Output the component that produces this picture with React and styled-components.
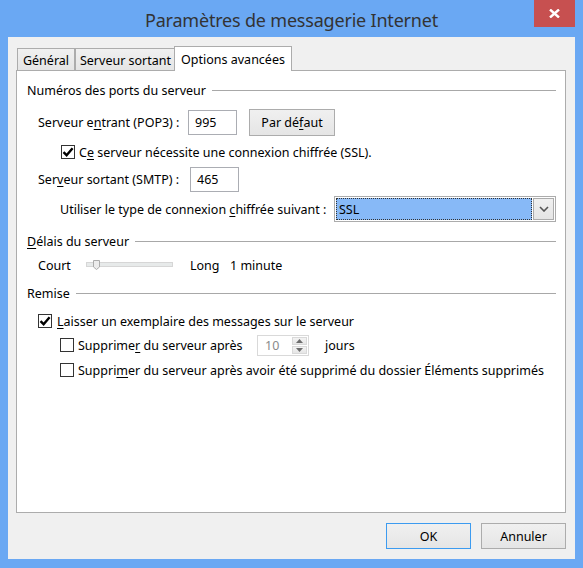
import React from 'react'
import styled, { createGlobalStyle } from 'styled-components'

const GlobalStyle = createGlobalStyle`
  html, body {
    margin: 0;
    padding: 0;
    overflow: hidden;
    background: #6aa8f3;
  }
  body {
    font-family: 'Noto Sans', 'Open Sans', sans-serif;
    font-size: 12.5px;
    color: #000;
  }
`

const Window = styled.div`
  width: 583px;
  height: 568px;
  background: #6aa8f3;
  display: flex;
  flex-direction: column;
  box-sizing: border-box;
`

const TitleBar = styled.div`
  height: 37px;
  display: grid;
  grid-template-columns: 1fr auto 1fr;
  padding: 0 8px;
  flex-shrink: 0;
`

const Title = styled.div`
  grid-column: 2;
  align-self: center;
  font-size: 18px;
  letter-spacing: -0.2px;
  color: #333;
  padding-top: 2px;
  white-space: nowrap;
`

const CloseButton = styled.div`
  grid-column: 3;
  justify-self: end;
  align-self: start;
  width: 41px;
  height: 27px;
  background: #c75050;
  display: flex;
  align-items: center;
  justify-content: center;
`

const Client = styled.div`
  flex: 1;
  margin: 0 8px 9px 8px;
  background: #f0f0f0;
  padding: 9px 9px 10px 8px;
  display: flex;
  flex-direction: column;
  min-height: 0;
`

const TabStrip = styled.div`
  display: flex;
  align-items: flex-end;
  height: 24px;
  padding-left: 1px;
  flex-shrink: 0;
`

const Tab = styled.div`
  box-sizing: border-box;
  width: ${p => p.$w}px;
  height: ${p => (p.$active ? 25 : 22)}px;
  margin-left: ${p => (p.$active ? -2 : 0)}px;
  margin-bottom: ${p => (p.$active ? -1 : 0)}px;
  border: 1px solid #acacac;
  border-bottom: none;
  background: ${p => (p.$active ? '#fff' : 'linear-gradient(#f0f0f0, #e5e5e5)')};
  display: flex;
  align-items: center;
  justify-content: center;
  padding-top: ${p => (p.$active ? 0 : 2)}px;
  position: relative;
  z-index: ${p => (p.$active ? 2 : 1)};
  white-space: nowrap;
`

const Panel = styled.div`
  flex: 1;
  border: 1px solid #acacac;
  background: #fff;
  padding: 3px 9px 0 10px;
  display: flex;
  flex-direction: column;
`

const Row = styled.div`
  display: flex;
  align-items: center;
  height: ${p => p.$h}px;
  padding-left: ${p => p.$indent || 0}px;
  white-space: nowrap;
  flex-shrink: 0;
`

const GroupTitle = styled.span`
  padding-right: 6px;
`

const Rule = styled.div`
  flex: 1;
  height: 1px;
  background: #a8a8a8;
  margin-top: 1px;
`

const Label = styled.span`
  display: inline-block;
  width: ${p => (p.$w ? `${p.$w}px` : 'auto')};
  margin-left: ${p => p.$gap || 0}px;
  flex-shrink: 0;
`

const Key = styled.u`
  text-decoration: underline;
  text-underline-offset: 2px;
`

const TextBox = styled.div`
  box-sizing: border-box;
  width: 49px;
  height: 25px;
  border: 1px solid #abadb3;
  background: #fff;
  display: flex;
  align-items: center;
  padding-left: 6px;
`

const PushButton = styled.div`
  box-sizing: border-box;
  width: ${p => p.$w}px;
  height: ${p => p.$hh}px;
  border: 1px solid ${p => (p.$default ? '#3c9bf0' : '#acacac')};
  background: linear-gradient(#f0f0f0, #e5e5e5);
  display: flex;
  align-items: center;
  justify-content: center;
  margin-left: ${p => p.$gap || 0}px;
  flex-shrink: 0;
`

const Box = styled.div`
  box-sizing: border-box;
  width: 14px;
  height: 14px;
  border: 1px solid #333;
  background: #fff;
  display: flex;
  align-items: center;
  justify-content: center;
  margin-right: ${p => p.$gap || 4}px;
  flex-shrink: 0;
`

const Combo = styled.div`
  box-sizing: border-box;
  width: 222px;
  height: 26px;
  border: 1px solid #acacac;
  padding: 1px;
  display: flex;
  background: #fff;
`

const ComboValue = styled.div`
  flex: 1;
  background: #87b9f7;
  outline: 1px dotted #333;
  outline-offset: -1px;
  display: flex;
  align-items: center;
  padding-left: 3px;
`

const ComboArrow = styled.div`
  box-sizing: border-box;
  width: 21px;
  margin-left: 1px;
  border: 1px solid #acacac;
  background: linear-gradient(#f0f0f0, #e5e5e5);
  display: flex;
  align-items: center;
  justify-content: center;
`

const Spin = styled.div`
  box-sizing: border-box;
  width: 52px;
  height: 21px;
  border: 1px solid #d9d9d9;
  display: flex;
  background: #fff;
  flex-shrink: 0;
`

const SpinValue = styled.div`
  flex: 1;
  color: #8a8a8a;
  display: flex;
  align-items: center;
  padding-left: 7px;
`

const SpinButtons = styled.div`
  width: 15px;
  margin: 1px;
  display: flex;
  flex-direction: column;
  gap: 1px;
`

const SpinHalf = styled.div`
  flex: 1;
  box-sizing: border-box;
  border: 1px solid #d9d9d9;
  background: linear-gradient(#f3f3f3, #e6e6e6);
  display: flex;
  align-items: center;
  justify-content: center;
`

const ButtonBar = styled.div`
  display: flex;
  justify-content: flex-end;
  gap: 10px;
  margin-top: 10px;
  flex-shrink: 0;
`

const Check = ({ checked, gap }) => (
  <Box $gap={gap}>
    {checked && (
      <svg width="12" height="12" viewBox="0 0 12 12">
        <path d="M1.5 6.2 L4.6 9.2 L10.6 2.2" fill="none" stroke="#000" strokeWidth="2.4" />
      </svg>
    )}
  </Box>
)

const Slider = () => (
  <svg width="88" height="10" viewBox="0 0 88 10" style={{ flexShrink: 0 }}>
    <rect x="0.5" y="2.5" width="86" height="4" fill="#e7eaea" stroke="#d6d6d6" />
    <path d="M7.5 0.5 H13.5 V7 L10.5 9.5 L7.5 7 Z" fill="#ececec" stroke="#acacac" />
  </svg>
)

export default function App() {
  return (
    <>
      <GlobalStyle />
      <Window>
        <TitleBar>
          <Title>Paramètres de messagerie Internet</Title>
          <CloseButton>
            <svg width="11" height="9" viewBox="0 0 11 9">
              <path d="M1 0.5 L10 8.5 M10 0.5 L1 8.5" stroke="#fff" strokeWidth="2.4" />
            </svg>
          </CloseButton>
        </TitleBar>
        <Client>
          <TabStrip>
            <Tab $w={58}>Général</Tab>
            <Tab $w={101}>Serveur sortant</Tab>
            <Tab $w={118} $active>Options avancées</Tab>
          </TabStrip>
          <Panel>
            <Row $h={32}>
              <GroupTitle>Numéros des ports du serveur</GroupTitle>
              <Rule />
            </Row>
            <Row $h={32} $indent={11}>
              <Label $w={150}>Serveur e<Key>n</Key>trant (POP3) :</Label>
              <TextBox>995</TextBox>
              <PushButton $w={86} $hh={27} $gap={12}>Par dé<Key>f</Key>aut</PushButton>
            </Row>
            <Row $h={28} $indent={34}>
              <Check checked />
              <span>C<Key>e</Key> serveur nécessite une connexion chiffrée (SSL).</span>
            </Row>
            <Row $h={26} $indent={11}>
              <Label $w={152}>Ser<Key>v</Key>eur sortant (SMTP) :</Label>
              <TextBox>465</TextBox>
            </Row>
            <Row $h={34} $indent={33}>
              <Label $w={274}>Utiliser le type de connexion <Key>c</Key>hiffrée suivant :</Label>
              <Combo>
                <ComboValue>SSL</ComboValue>
                <ComboArrow>
                  <svg width="10" height="6" viewBox="0 0 10 6">
                    <path d="M1 1 L5 5 L9 1" fill="none" stroke="#555" strokeWidth="1.6" />
                  </svg>
                </ComboArrow>
              </Combo>
            </Row>
            <Row $h={30}>
              <GroupTitle><Key>D</Key>élais du serveur</GroupTitle>
              <Rule />
            </Row>
            <Row $h={18} $indent={11}>
              <Label $w={48}>Court</Label>
              <Slider />
              <Label $w={40} $gap={16}>Long</Label>
              <Label>1 minute</Label>
            </Row>
            <Row $h={38}>
              <GroupTitle>Remise</GroupTitle>
              <Rule />
            </Row>
            <Row $h={18} $indent={11}>
              <Check checked gap={5} />
              <span><Key>L</Key>aisser un exemplaire des messages sur le serveur</span>
            </Row>
            <Row $h={30} $indent={33}>
              <Check />
              <Label $w={179}>Supprime<Key>r</Key> du serveur après</Label>
              <Spin>
                <SpinValue>10</SpinValue>
                <SpinButtons>
                  <SpinHalf>
                    <svg width="7" height="4" viewBox="0 0 7 4"><path d="M0 4 L3.5 0 L7 4 Z" fill="#6d6d6d" /></svg>
                  </SpinHalf>
                  <SpinHalf>
                    <svg width="7" height="4" viewBox="0 0 7 4"><path d="M0 0 L3.5 4 L7 0 Z" fill="#6d6d6d" /></svg>
                  </SpinHalf>
                </SpinButtons>
              </Spin>
              <Label $gap={16}>jours</Label>
            </Row>
            <Row $h={20} $indent={33}>
              <Check />
              <span>Suppri<Key>m</Key>er du serveur après avoir été supprimé du dossier Éléments supprimés</span>
            </Row>
          </Panel>
          <ButtonBar>
            <PushButton $w={85} $hh={26} $default>OK</PushButton>
            <PushButton $w={85} $hh={26}>Annuler</PushButton>
          </ButtonBar>
        </Client>
      </Window>
    </>
  )
}
